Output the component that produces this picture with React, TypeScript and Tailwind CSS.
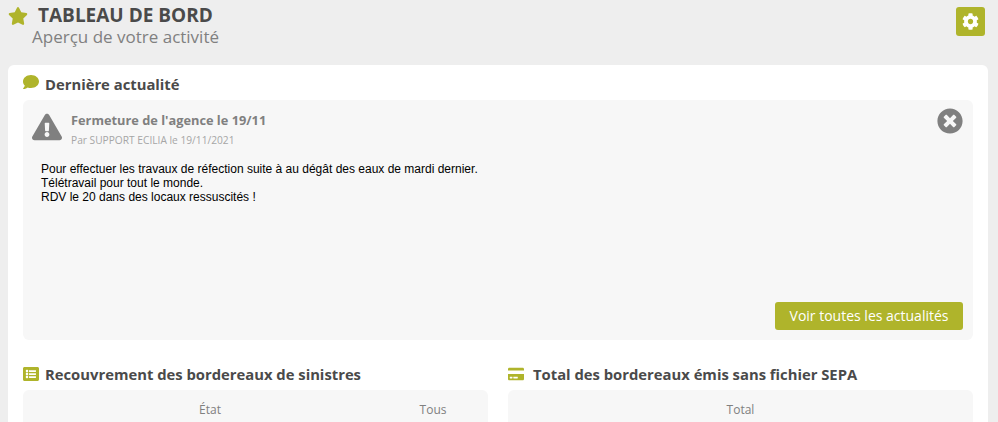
import { FaCog, FaComment, FaCreditCard, FaExclamationTriangle, FaListAlt, FaStar, FaTimesCircle } from "react-icons/fa";

function SectionTitle({ icon, title, iconWidth }: { icon: React.ReactNode; title: string; iconWidth: string }) {
  return (
    <div className="flex h-[20px] items-center">
      <span className={`flex shrink-0 text-[16px] text-[#afb42b] ${iconWidth}`}>{icon}</span>
      <h2 className="text-[14.8px] leading-[20px] font-bold text-[#4a4a4a]">{title}</h2>
    </div>
  );
}

export default function App() {
  return (
    <div className="h-[422px] overflow-hidden bg-[#eeeeee] font-['Open_Sans',sans-serif]">
      {/* Header */}
      <header className="flex justify-between pt-[3px] pr-[13px] pl-[8px]">
        <div>
          <div className="flex h-[24px] items-center gap-[10px]">
            <FaStar className="mt-[2px] text-[20px] text-[#afb42b]" />
            <h1 className="text-[19px] leading-[24px] font-bold text-[#4a4a4a]">TABLEAU DE BORD</h1>
          </div>
          <p className="pl-[24px] text-[17px] leading-[20px] text-[#808080]">Aperçu de votre activité</p>
        </div>
        <button className="mt-[4px] flex h-[29px] w-[29px] items-center justify-center rounded-[3px] bg-[#afb42b] text-[17px] text-white">
          <FaCog />
        </button>
      </header>

      {/* Main card */}
      <main className="mt-[18px] mr-[10px] ml-[8px] rounded-t-[6px] bg-white px-[15px] pt-[9px]">
        <SectionTitle icon={<FaComment className="mt-[-4px]" />} iconWidth="w-[22px]" title="Dernière actualité" />

        <section className="mt-[6px] flex h-[240px] flex-col rounded-[6px] bg-[#f7f7f7] px-[10px] pt-[9px] pb-[10px]">
          <div className="flex justify-between">
            <div className="flex">
              <FaExclamationTriangle className="mt-[3px] ml-[-1px] text-[30px] text-[#808080]" />
              <div className="ml-[9px]">
                <h3 className="mt-[1px] text-[12.8px] leading-[20px] font-bold text-[#808080]">Fermeture de l'agence le 19/11</h3>
                <p className="mt-[1px] text-[10.2px] leading-[18px] text-[#a6a6a6]">Par SUPPORT ECILIA le 19/11/2021</p>
              </div>
            </div>
            <FaTimesCircle className="mt-[-1px] text-[26px] text-[#808080]" />
          </div>

          <div className="mt-[13px] pl-[8px] font-['Liberation_Sans',sans-serif] text-[12px] leading-[14px] text-black">
            <p>Pour effectuer les travaux de réfection suite à au dégât des eaux de mardi dernier.</p>
            <p>Télétravail pour tout le monde.</p>
            <p>RDV le 20 dans des locaux ressuscités !</p>
          </div>

          <button className="mt-auto h-[28px] self-end rounded-[3px] bg-[#afb42b] px-[14.5px] pb-[2px] text-[14px] text-white">
            Voir toutes les actualités
          </button>
        </section>

        {/* Bottom tables */}
        <div className="mt-[24px] grid grid-cols-2 gap-[20px]">
          <div>
            <SectionTitle icon={<FaListAlt />} iconWidth="w-[22px]" title="Recouvrement des bordereaux de sinistres" />
            <div className="mt-[6px] flex h-[60px] rounded-t-[6px] bg-[#f7f7f7] pt-[11px] text-[12px] leading-[18px] text-[#808080]">
              <span className="w-[374px] text-center">État</span>
              <span className="w-[72px] text-center">Tous</span>
            </div>
          </div>
          <div>
            <SectionTitle icon={<FaCreditCard />} iconWidth="w-[25px]" title="Total des bordereaux émis sans fichier SEPA" />
            <div className="mt-[6px] h-[60px] rounded-t-[6px] bg-[#f7f7f7] pt-[11px] text-center text-[12px] leading-[18px] text-[#808080]">
              Total
            </div>
          </div>
        </div>
      </main>
    </div>
  );
}
